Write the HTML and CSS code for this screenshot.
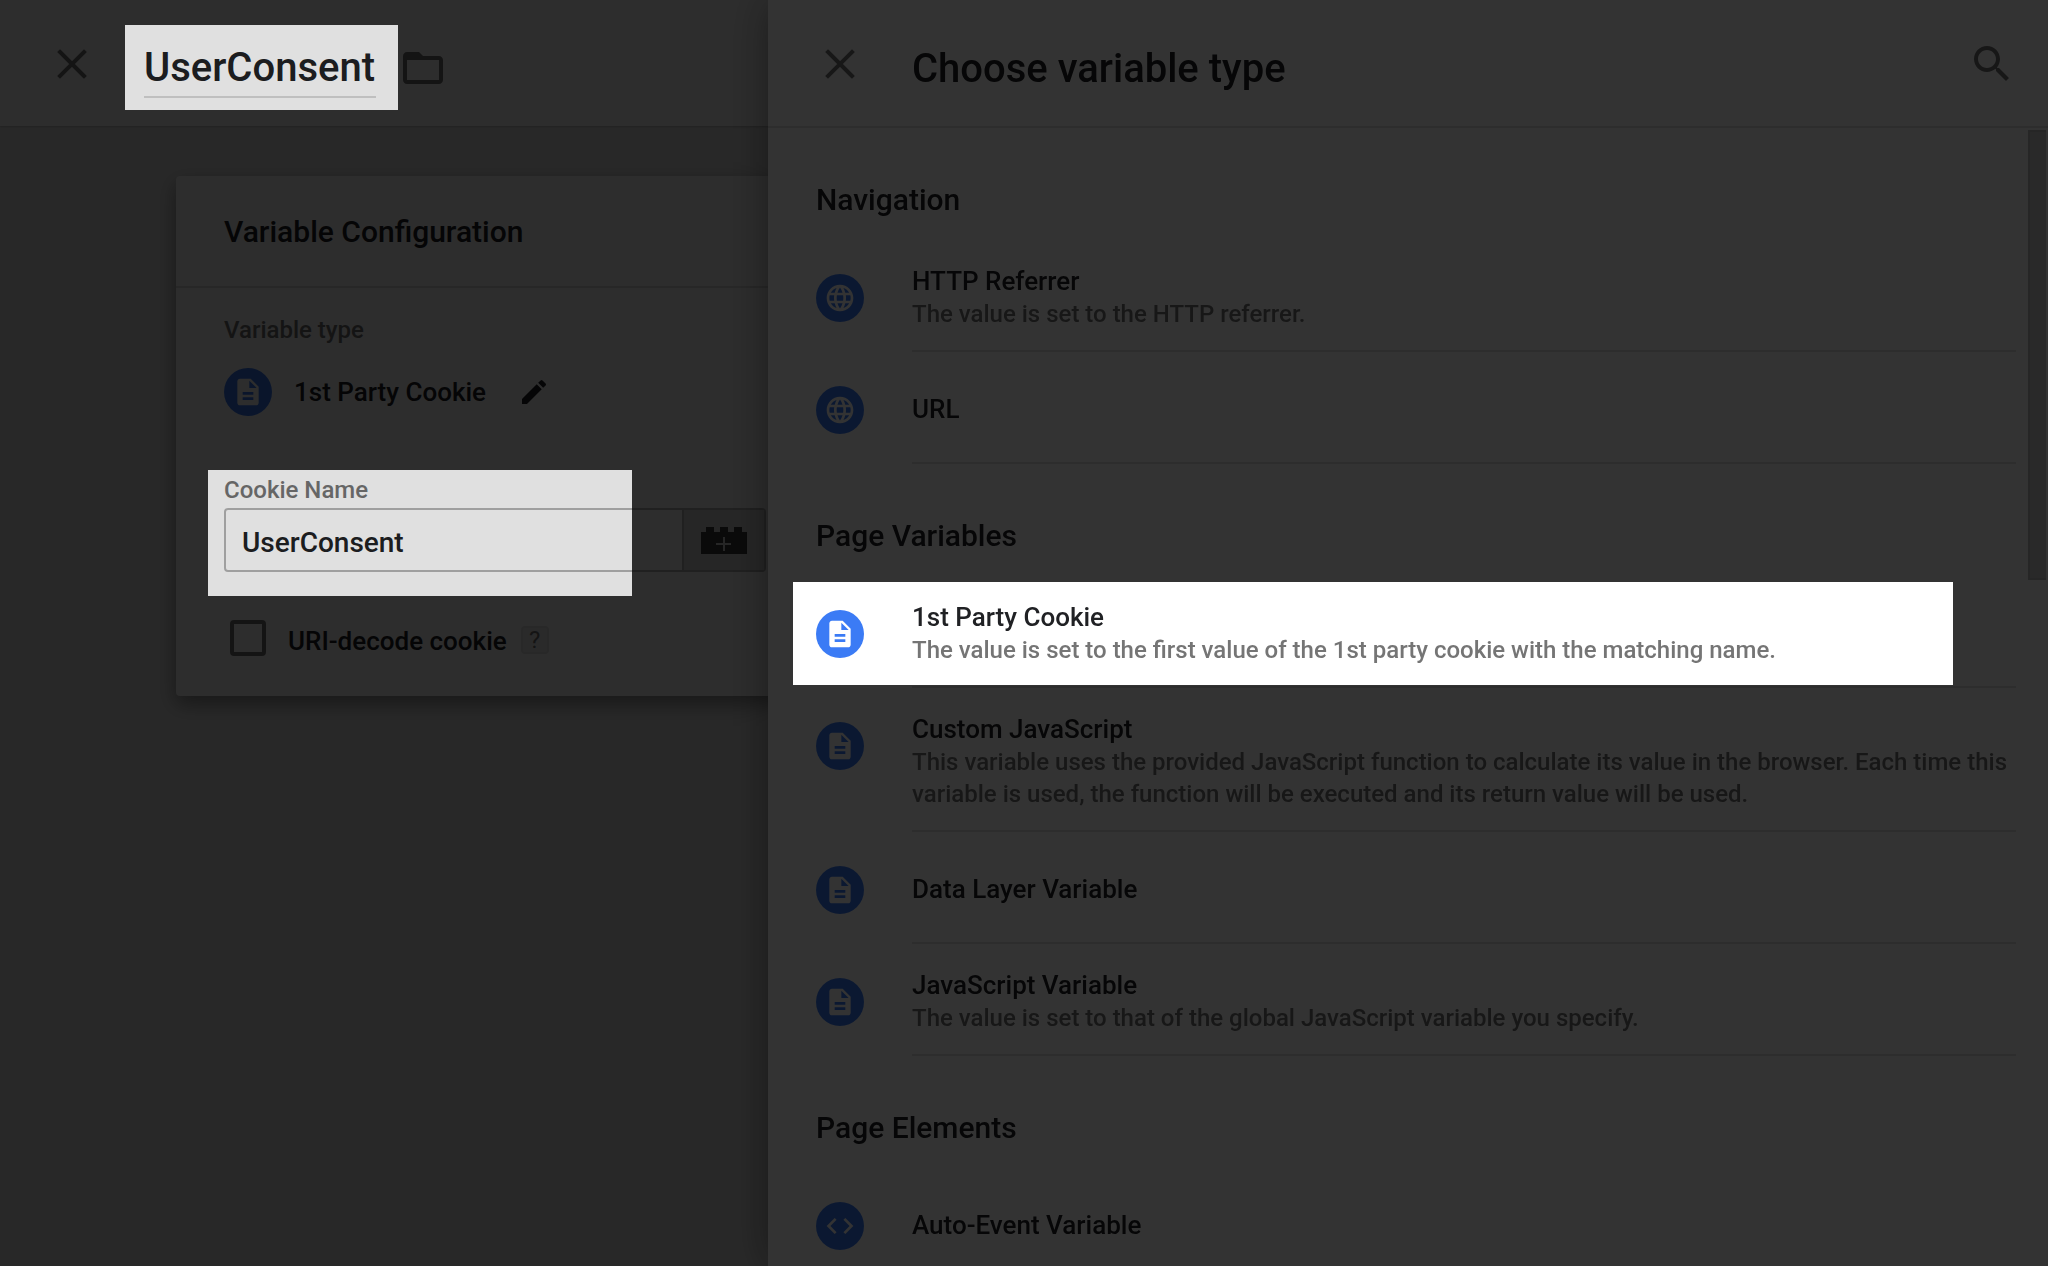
FILE: index.html
```html
<!DOCTYPE html>
<html lang="en">
<head>
<meta charset="utf-8">
<meta name="viewport" content="width=device-width, initial-scale=1">
<title>Choose variable type</title>
<link rel="stylesheet" href="styles.css">
</head>
<body>
<svg class="sprite" aria-hidden="true">
  <symbol id="close" viewBox="0 0 24 24"><path d="M6 6L18 18M18 6L6 18" fill="none" stroke="currentColor" stroke-width="2" stroke-linecap="square"/></symbol>
  <symbol id="folder" viewBox="0 0 24 24"><path fill="currentColor" d="M20 6h-8l-2-2H4c-1.100 0-1.990.9-1.990 2L2 18c0 1.100.9 2 2 2h16c1.100 0 2-.9 2-2V8c0-1.100-.9-2-2-2zm0 12H4V8h16v10z"/></symbol>
  <symbol id="search" viewBox="0 0 24 24"><path fill="currentColor" d="M15.500 14h-.79l-.28-.27C15.410 12.590 16 11.110 16 9.500 16 5.910 13.090 3 9.500 3S3 5.910 3 9.500 5.910 16 9.500 16c1.610 0 3.090-.59 4.230-1.570l.27.28v.79l5 4.990L20.490 19l-4.990-5zm-6 0C7.010 14 5 11.990 5 9.500S7.010 5 9.500 5 14 7.010 14 9.500 11.990 14 9.500 14z"/></symbol>
  <symbol id="edit" viewBox="0 0 24 24"><path fill="currentColor" d="M3 17.250V21h3.750L17.810 9.940l-3.750-3.750L3 17.250zM20.710 7.040a1 1 0 0 0 0-1.410l-2.340-2.340a1 1 0 0 0-1.410 0l-1.830 1.830 3.750 3.750 1.830-1.830z"/></symbol>
  <symbol id="brick" viewBox="0 0 46 27"><path fill="currentColor" d="M0 5h5V0h8v5h6V0h8v5h6V0h8v5h5v22H0z"/><path class="brick-plus" d="M15 17h15M23 10v14" fill="none" stroke-width="2"/></symbol>
  <symbol id="doc" viewBox="0 0 24 24"><path fill="currentColor" d="M14 2H6c-1.100 0-1.990.9-1.990 2L4 20c0 1.100.89 2 1.990 2H18c1.100 0 2-.9 2-2V8l-6-6zm2 16H8v-2h8v2zm0-4H8v-2h8v2zm-3-5V3.500L18.500 9H13z"/></symbol>
  <symbol id="globe" viewBox="0 0 24 24"><path fill="currentColor" d="M11.990 2C6.470 2 2 6.480 2 12s4.470 10 9.990 10C17.520 22 22 17.520 22 12S17.520 2 11.990 2zm6.930 6h-2.950c-.32-1.250-.78-2.450-1.380-3.560 1.840.63 3.370 1.910 4.330 3.560zM12 4.040c.83 1.200 1.480 2.530 1.910 3.960h-3.820c.43-1.430 1.080-2.760 1.910-3.960zM4.260 14C4.100 13.360 4 12.690 4 12s.1-1.360.26-2h3.380c-.08.66-.14 1.320-.14 2s.06 1.340.14 2H4.260zm.82 2h2.950c.32 1.250.78 2.450 1.380 3.560-1.840-.63-3.370-1.900-4.330-3.560zm2.950-8H5.080c.96-1.660 2.490-2.930 4.330-3.560C8.810 5.550 8.350 6.750 8.030 8zM12 19.960c-.83-1.200-1.480-2.530-1.910-3.960h3.820c-.43 1.430-1.080 2.760-1.910 3.960zM14.340 14H9.660c-.09-.66-.16-1.320-.16-2s.07-1.350.16-2h4.680c.09.65.16 1.320.16 2s-.07 1.340-.16 2zm.25 5.560c.6-1.110 1.060-2.310 1.380-3.560h2.950c-.96 1.650-2.490 2.930-4.330 3.560zM16.360 14c.08-.66.14-1.320.14-2s-.06-1.340-.14-2h3.380c.16.64.26 1.310.26 2s-.1 1.360-.26 2h-3.380z"/></symbol>
  <symbol id="code" viewBox="0 0 24 24"><path fill="currentColor" d="M9.400 16.600L4.800 12l4.600-4.600L8 6l-6 6 6 6 1.400-1.400zm5.200 0l4.600-4.600-4.600-4.600L16 6l6 6-6 6-1.400-1.400z"/></symbol>
</svg>

<main class="workspace">
  <header class="topbar">
    <button class="icon-button" aria-label="Close editor"><svg><use href="#close"/></svg></button>
    <input class="title-input" type="text" value="UserConsent" aria-label="Variable name">
    <button class="icon-button folder-button" aria-label="Move to folder"><svg><use href="#folder"/></svg></button>
  </header>
  <section class="card">
    <h2 class="card-title">Variable Configuration</h2>
    <div class="card-body">
      <p class="field-label">Variable type</p>
      <div class="type-row">
        <span class="badge"><svg><use href="#doc"/></svg></span>
        <span class="type-name">1st Party Cookie</span>
        <button class="edit-button" aria-label="Edit variable type"><svg><use href="#edit"/></svg></button>
      </div>
      <label class="field-label" for="cookie-name">Cookie Name</label>
      <div class="input-group">
        <input class="text-input" id="cookie-name" type="text" value="UserConsent">
        <button class="addon" aria-label="Insert variable"><svg><use href="#brick"/></svg></button>
      </div>
      <div class="check-row">
        <input class="checkbox" id="decode" type="checkbox">
        <label class="check-label" for="decode">URI-decode cookie</label>
        <button class="help" aria-label="Help">?</button>
      </div>
    </div>
  </section>
</main>

<aside class="panel">
  <header class="panel-header">
    <button class="icon-button" aria-label="Close panel"><svg><use href="#close"/></svg></button>
    <h1 class="panel-title">Choose variable type</h1>
    <button class="icon-button" aria-label="Search"><svg><use href="#search"/></svg></button>
  </header>
  <div class="panel-body">
    <h2 class="group-title">Navigation</h2>
    <ul class="list">
      <li class="item"><span class="badge"><svg><use href="#globe"/></svg></span>
        <div class="item-text"><h3 class="item-name">HTTP Referrer</h3><p class="item-desc">The value is set to the HTTP referrer.</p></div></li>
      <li class="item"><span class="badge"><svg><use href="#globe"/></svg></span>
        <div class="item-text"><h3 class="item-name">URL</h3></div></li>
    </ul>
    <h2 class="group-title">Page Variables</h2>
    <ul class="list">
      <li class="item"><span class="badge"><svg><use href="#doc"/></svg></span>
        <div class="item-text"><h3 class="item-name">1st Party Cookie</h3><p class="item-desc">The value is set to the first value of the 1st party cookie with the matching name.</p></div></li>
      <li class="item"><span class="badge"><svg><use href="#doc"/></svg></span>
        <div class="item-text"><h3 class="item-name">Custom JavaScript</h3><p class="item-desc">This variable uses the provided JavaScript function to calculate its value in the browser. Each time this variable is used, the function will be executed and its return value will be used.</p></div></li>
      <li class="item"><span class="badge"><svg><use href="#doc"/></svg></span>
        <div class="item-text"><h3 class="item-name">Data Layer Variable</h3></div></li>
      <li class="item"><span class="badge"><svg><use href="#doc"/></svg></span>
        <div class="item-text"><h3 class="item-name">JavaScript Variable</h3><p class="item-desc">The value is set to that of the global JavaScript variable you specify.</p></div></li>
    </ul>
    <h2 class="group-title">Page Elements</h2>
    <ul class="list">
      <li class="item"><span class="badge"><svg><use href="#code"/></svg></span>
        <div class="item-text"><h3 class="item-name">Auto-Event Variable</h3></div></li>
    </ul>
    <div class="scroll-thumb"></div>
  </div>
</aside>

<div class="scrim"></div>
</body>
</html>
```
FILE: styles.css
```css
*, *::before, *::after { box-sizing: border-box; }

body {
  margin: 0;
  height: 100vh;
  overflow: hidden;
  font-family: Roboto, "Noto Sans", sans-serif;
  font-weight: 500;
  color: #202124;
  background: #e5e5e5;
}

h1, h2, h3, p, ul { margin: 0; padding: 0; font-weight: 500; }
ul { list-style: none; }
button, input { font: inherit; color: inherit; margin: 0; padding: 0; border: 0; background: none; border-radius: 0; outline: 0; }
svg { display: block; }
.sprite { position: absolute; width: 0; height: 0; }

.icon-button { flex: none; width: 48px; height: 48px; color: #757575; }
.icon-button svg { width: 48px; height: 48px; }

/* Editor page */
.workspace { position: relative; height: 100vh; overflow: hidden; }
.workspace::after { content: ""; position: absolute; inset: 0; background: rgba(0, 0, 0, .12); pointer-events: none; }

.topbar {
  display: flex;
  align-items: center;
  height: 126px;
  padding: 2px 48px 0;
  background: #fff;
  box-shadow: 0 1px 2px rgba(0, 0, 0, .2);
}
.title-input {
  width: 232px;
  height: 64px;
  margin: 4px 23px 0 48px;
  padding-top: 4px;
  font-size: 40px;
  border-bottom: 2px solid #dadada;
}
.folder-button { margin-top: 8px; }

.card {
  margin: 50px 176px 0;
  background: #fff;
  border-radius: 4px;
  box-shadow: 0 8px 20px rgba(0, 0, 0, .4);
}
.card-title {
  padding: 36px 48px 34px;
  font-size: 30px;
  line-height: 40px;
  border-bottom: 2px solid #e0e0e0;
}
.card-body { padding: 24px 48px 38px; }
.field-label { display: block; font-size: 24px; line-height: 36px; color: #757575; }
.type-row { display: flex; align-items: center; height: 48px; margin: 20px 0 56px; }
.type-name { margin: 0 32px 0 22px; font-size: 26px; line-height: 32px; }
.edit-button svg { width: 32px; height: 32px; }

.input-group {
  display: flex;
  max-width: 542px;
  height: 64px;
  border: 2px solid #b6b6b6;
  border-radius: 4px;
}
.text-input { flex: 1; min-width: 0; padding: 4px 16px 0; font-size: 28px; }
.addon {
  display: grid;
  place-items: center;
  width: 82px;
  color: #3c3c3c;
  background: #dadada;
  border-left: 2px solid #b6b6b6;
}
.addon svg { width: 46px; height: 27px; }
.brick-plus { stroke: #dadada; }

.check-row { display: flex; align-items: center; height: 40px; margin-top: 46px; padding-left: 6px; }
.checkbox { appearance: none; flex: none; width: 36px; height: 36px; border: 4px solid #757575; border-radius: 4px; }
.check-label { margin: 6px 14px 0 22px; font-size: 26px; line-height: 32px; }
.help { width: 28px; height: 28px; margin-top: 4px; font-size: 24px; line-height: 24px; font-weight: 400; color: #757575; background: #f0f0f0; border: 2px solid #e4e4e4; border-radius: 4px; }

.badge {
  display: grid;
  place-items: center;
  flex: none;
  width: 48px;
  height: 48px;
  border-radius: 50%;
  color: #fff;
  background: #3b7bf5;
}
.badge svg { width: 32px; height: 32px; }

/* Slide-over panel */
.panel {
  position: fixed;
  inset: 0 0 0 auto;
  width: 62.5%;
  overflow: hidden;
  background: #fff;
  box-shadow: 0 0 40px rgba(0, 0, 0, .4);
}
.panel-header {
  display: flex;
  align-items: center;
  height: 128px;
  padding: 2px 32px 0 48px;
  border-bottom: 2px solid #e0e0e0;
}
.panel-title { flex: 1; margin: 10px 0 0 48px; font-size: 40px; line-height: 48px; }
.panel-body { position: relative; padding: 0 32px 0 48px; }
.group-title { padding: 52px 0 20px; font-size: 30px; line-height: 40px; }

.item { display: flex; align-items: flex-start; gap: 48px; }
.item .badge { margin-top: 34px; }
.item-text {
  display: flex;
  flex: 1;
  flex-direction: column;
  justify-content: center;
  min-height: 112px;
  padding: 26px 0 20px;
  border-bottom: 2px solid #e0e0e0;
}
.item-name { margin-bottom: 2px; font-size: 26px; line-height: 30px; }
.item-desc { font-size: 24px; line-height: 32px; color: #757575; }

.scroll-thumb { position: absolute; top: 2px; right: 2px; width: 18px; height: 450px; background: #cacaca; border: 2px solid #bebebe; border-right: 0; }

/* Dimming layer with three openings: variable name, cookie name, chosen type */
.scrim {
  position: fixed;
  inset: 0;
  pointer-events: none;
  background: rgba(0, 0, 0, .8);
  clip-path: polygon(evenodd,
    0 0, 100% 0, 100% 100%, 0 100%, 0 0,
    125px 25px, 398px 25px, 398px 110px, 125px 110px, 125px 25px, 0 0,
    208px 470px, 632px 470px, 632px 596px, 208px 596px, 208px 470px, 0 0,
    calc(37.5% + 25px) 582px, calc(100% - 95px) 582px, calc(100% - 95px) 685px, calc(37.5% + 25px) 685px, calc(37.5% + 25px) 582px, 0 0);
}
```
